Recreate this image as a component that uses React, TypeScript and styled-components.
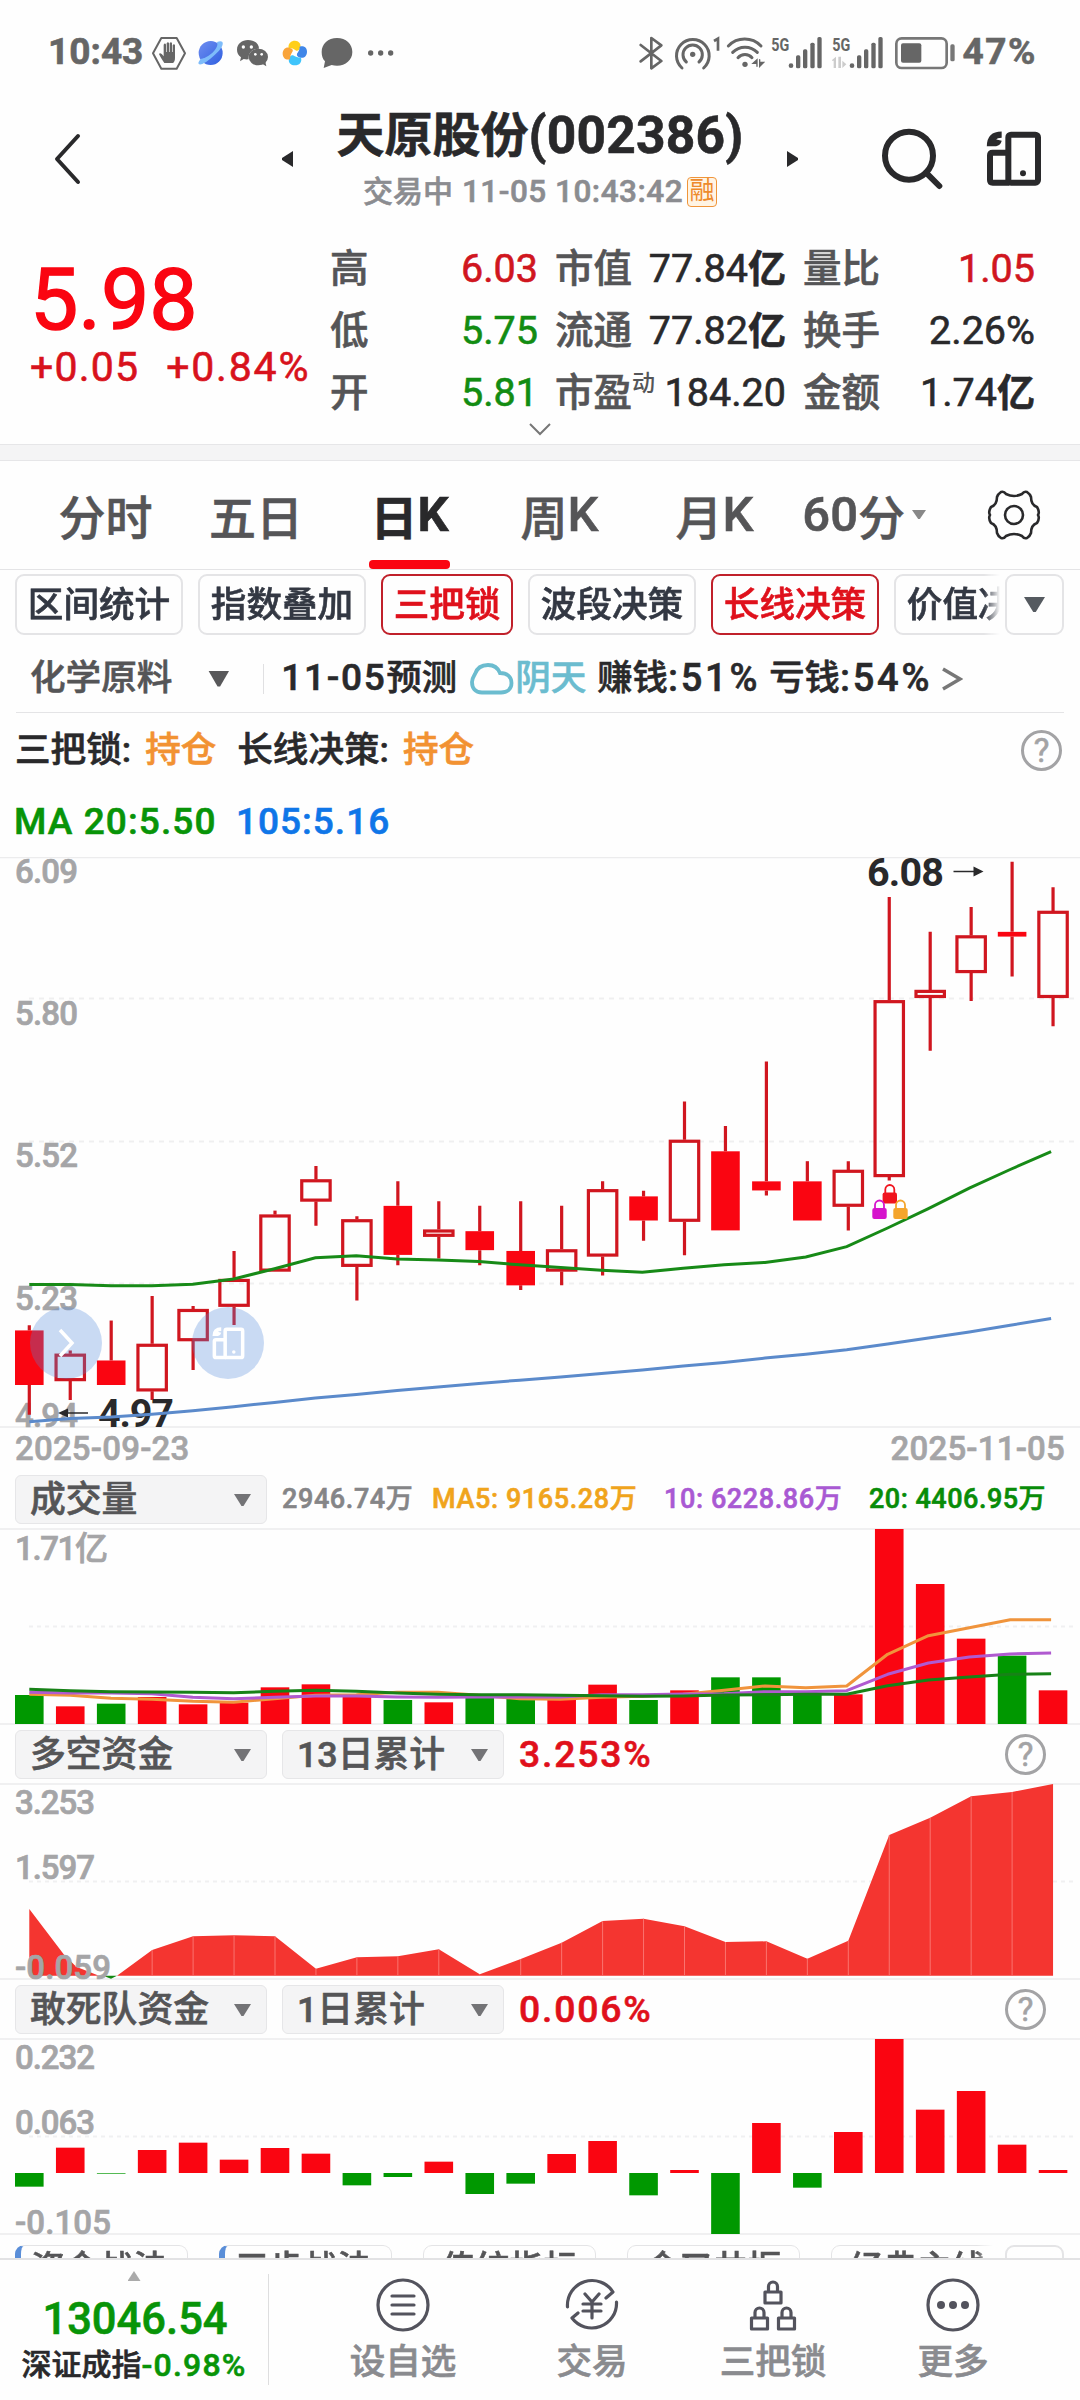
import React from "react";
import styled, { createGlobalStyle, css } from "styled-components";

const RED = "#fa0511";
const DEEP_RED = "#d0161f";
const GREEN = "#009800";
const INK = "#29292b";
const SLATE = "#555557";
const MUTED = "#a5a5a7";
const LINE = "#e6e6e8";
const FONT = 'Roboto, "Noto Sans CJK SC", sans-serif';

const Global = createGlobalStyle`
  * { box-sizing: border-box; }
  body { margin: 0; background: #fdfdfe; font-family: ${FONT}; }
`;

const Screen = styled.main`
  width: 1080px;
  height: 2400px;
  overflow: hidden;
  display: flex;
  flex-direction: column;
  background: #fefefe;
  color: ${INK};
  -webkit-text-stroke: 0.6px;
`;

const Txt = styled.span<{ $s: number; $c?: string; $w?: number; $ls?: number; $ml?: number; $wd?: number }>`
  font-size: ${(p) => p.$s}px;
  line-height: 1.2;
  color: ${(p) => p.$c ?? INK};
  font-weight: ${(p) => p.$w ?? 500};
  letter-spacing: ${(p) => p.$ls ?? 0}px;
  margin-left: ${(p) => p.$ml ?? 0}px;
  ${(p) => p.$wd && css`width: ${p.$wd}px;`}
  white-space: nowrap;
  flex: none;
`;

const Glyph = styled.svg<{ $ml?: number }>`
  display: block;
  flex: none;
  margin-left: ${(p) => p.$ml ?? 0}px;
`;

/* ---------- status bar ---------- */
const StatusBar = styled.div`
  height: 105px;
  flex: none;
  display: flex;
  align-items: center;
  padding: 0 43px 0 48px;
`;
const Spacer = styled.div`flex: 1;`;

function SignalBars({ idle, ml }: { idle?: boolean; ml: number }) {
  return (
    <Glyph width="51" height="36" viewBox="452 43 153 108" $ml={ml} fill="#666">
      <text x="453" y="90" fontFamily="Roboto" fontSize="54" fontWeight="700" textLength="54" lengthAdjust="spacingAndGlyphs">5G</text>
      {idle && <path d="M464 108v34h-7v-22h-7zM471 108v34h7v-34zM483 120v22l12-11zM471 142h8v-34h-8z" fill="#ccc" />}
      <circle cx="512" cy="135" r="7" />
      <rect x="527" y="104" width="13" height="39" rx="5" />
      <rect x="548" y="86" width="13" height="57" rx="5" />
      <rect x="570" y="66" width="13" height="77" rx="5" />
      <rect x="591" y="49" width="13" height="94" rx="5" />
    </Glyph>
  );
}

function Status() {
  return (
    <StatusBar>
      <Txt $s={37} $c="#666" $w={700} $wd={103} $ls={0}>10:43</Txt>
      <Glyph width="36" height="34" viewBox="333 47 108 102" $ml={0}>
        <path d="M364 53h46l25 46-25 46h-46l-25-46z" fill="none" stroke="#666" strokeWidth="6" strokeLinejoin="round" />
        <path d="M373 128c-6-8-12-19-16-27 3-5 8-1 14 7V73c2-5 6-5 7 0v22h2V69c2-4 6-4 7 0v26h2V69c2-4 6-4 7 0v26h2V75c2-4 6-4 7 0v38c0 8-2 12-6 15z" fill="#666" />
      </Glyph>
      <Glyph width="26" height="26" viewBox="475 60 78 78" $ml={11}>
        <defs>
          <linearGradient id="pl" x1="0" y1="0" x2="1" y2="1">
            <stop offset="0" stopColor="#6f8ef0" />
            <stop offset="1" stopColor="#2f5fe0" />
          </linearGradient>
        </defs>
        <circle cx="513" cy="99" r="36" fill="url(#pl)" />
        <path d="M532 66c22-8 22 8 6 26-16 17-34 32-50 40-16 5-14-6-4-16 18 0 56-30 48-50z" fill="#7ebcfa" />
      </Glyph>
      <Glyph width="33" height="28" viewBox="590 56 99 84" $ml={12}>
        <path d="M626 59c19 0 33 11 33 26-22 0-33 14-31 32-6 1-11 0-15-1l-11 7 3-12c-8-6-12-14-12-23 0-17 15-29 33-29z" fill="#666" />
        <ellipse cx="657" cy="110" rx="29" ry="25" fill="#666" />
        <path d="M668 130l13 8-3-14z" fill="#666" />
        <g fill="#fff">
          <circle cx="612" cy="80" r="5" /><circle cx="636" cy="80" r="5" />
          <circle cx="648" cy="102" r="4" /><circle cx="667" cy="102" r="4" />
        </g>
      </Glyph>
      <Glyph width="26" height="26" viewBox="727 60 78 78" $ml={13}>
        <path d="M747 84c-3-14 8-22 19-22s19 9 16 20c-3 9-9 12-12 10-8-6-14-8-23-8z" fill="#ffcf1a" />
        <path d="M780 80c13-4 22 3 22 15s-9 21-20 18c-9-3-12-8-10-12 5-7 8-12 8-21z" fill="#3f86e8" />
        <path d="M784 113c4 13-5 23-18 23s-21-8-18-20c3-9 8-12 12-10 8 5 14 7 24 7z" fill="#3fc4fb" />
        <path d="M751 118c-13 3-22-5-22-17s9-21 20-18c9 2 12 7 10 11-5 8-8 14-8 24z" fill="#f9a43a" />
        <rect x="760" y="93" width="12" height="12" fill="#fff" rx="4" />
      </Glyph>
      <Glyph width="32" height="32" viewBox="843 51 96 96" $ml={13}>
        <path d="M891 54c27 0 46 18 46 42s-20 41-46 41c-6 0-11-1-16-2l-24 9 4-20c-7-7-10-17-10-28 0-24 19-42 46-42z" fill="#666" />
      </Glyph>
      <Glyph width="28" height="10" viewBox="981 82 84 30" $ml={14} fill="#666">
        <circle cx="992" cy="97" r="8" /><circle cx="1022" cy="97" r="8" /><circle cx="1052" cy="97" r="8" />
      </Glyph>
      <Spacer />
      <Glyph width="25" height="36" viewBox="52 43 75 108">
        <path d="M57 73l62 48-30 22V52l30 22-62 48" fill="none" stroke="#666" strokeWidth="8" strokeLinejoin="round" strokeLinecap="round" />
      </Glyph>
      <Glyph width="47" height="36" viewBox="158 43 141 108" $ml={10} fill="none" stroke="#666" strokeWidth="9" strokeLinecap="round">
        <path d="M182 142a49 49 0 1 1 65 0" />
        <path d="M195 124a29 29 0 1 1 38 0" />
        <circle cx="214" cy="101" r="8" fill="#666" stroke="none" />
        <path d="M278 61l12-7v36" strokeWidth="8" strokeLinecap="butt" />
      </Glyph>
      <Glyph width="39" height="36" viewBox="315 43 117 108" $ml={5} fill="none" stroke="#666" strokeWidth="9" strokeLinecap="round">
        <path d="M322 76a68 68 0 0 1 98 0M335 95a52 52 0 0 1 74 0M351 111a28 28 0 0 1 42 0" />
        <circle cx="372" cy="131" r="8" fill="#666" stroke="none" />
        <path d="M408 137v-20l-12 11h11M416 117v20l12-12h-11" strokeWidth="4" fill="#666" strokeLinejoin="miter" />
      </Glyph>
      <SignalBars ml={6} />
      <SignalBars idle ml={10} />
      <Glyph width="63" height="36" viewBox="822 43 189 108" $ml={11}>
        <rect x="829" y="53" width="151" height="89" rx="16" fill="none" stroke="#777" strokeWidth="8" />
        <rect x="843" y="68" width="61" height="58" rx="6" fill="#666" />
        <rect x="991" y="71" width="13" height="51" rx="5" fill="#777" />
      </Glyph>
      <Txt $s={37} $c="#666" $w={700} $ml={5} $ls={1.6}>47%</Txt>
    </StatusBar>
  );
}

/* ---------- header ---------- */
const HeaderBar = styled.header`
  height: 108px;
  margin-bottom: 12px;
  flex: none;
  display: flex;
  align-items: center;
`;
const TitleStack = styled.div`
  width: 494px;
  height: 108px;
  display: flex;
  flex-direction: column;
  align-items: center;
`;
const TitleLine = styled.h1`
  margin: 1px 0 0;
  height: 59px;
  flex: none;
  display: flex;
  align-items: center;
`;
const SubLine = styled.div`
  height: 54px;
  flex: none;
  display: flex;
  align-items: center;
`;
const MarginBadge = styled.span`
  width: 30px;
  height: 30px;
  margin-left: 4px;
  border: 1.5px solid #f0953a;
  border-radius: 4px;
  background: #fff4e4;
  color: #ee8a2c;
  font-size: 25px;
  line-height: 26px;
  text-align: center;
  -webkit-text-stroke: 0;
`;

function FlipGlyph({ size, color, ml, w = 18 }: { size: number; color: string; ml?: number; w?: number }) {
  return (
    <Glyph width={size} height={size} viewBox="1098 334 168 168" $ml={ml} fill="none" stroke={color} strokeWidth={w}>
      <rect x="1165" y="345" width="89" height="144" rx="8" />
      <path d="M1165 399h-47q-8 0-8 8v74q0 8 8 8h50" />
      <path d="M1145 345q-35 0-35 35M1106 370h21q7-1 9-9" strokeWidth={w + 1} />
      <circle cx="1209" cy="461" r="9" fill={color} stroke="none" />
    </Glyph>
  );
}

function Header() {
  return (
    <HeaderBar>
      <Glyph width="28" height="52" viewBox="0 0 28 52" $ml={53}>
        <path d="M25 3L4 26l21 23" fill="none" stroke={INK} strokeWidth="4" strokeLinecap="round" strokeLinejoin="round" />
      </Glyph>
      <Glyph width="12" height="16" viewBox="0 0 12 16" $ml={200}><path d="M12 0v16L1 9V7z" fill={INK} /></Glyph>
      <TitleStack>
        <TitleLine>
          <Txt $s={48} $w={700}>天原股份</Txt>
          <Txt $s={51.5} $w={700} $ls={0.2}>(002386)</Txt>
        </TitleLine>
        <SubLine>
          <Txt $s={30} $c="#8b8c90">交易中</Txt>
          <Txt $s={31.5} $c="#8b8c90" $ml={9} $ls={0.5}>11-05 10:43:42</Txt>
          <MarginBadge>融</MarginBadge>
        </SubLine>
      </TitleStack>
      <Glyph width="12" height="16" viewBox="0 0 12 16"><path d="M0 0v16l11-7V7z" fill={INK} /></Glyph>
      <Glyph width="62" height="62" viewBox="783 324 186 186" $ml={82} fill="none" stroke={INK} strokeWidth="18">
        <circle cx="867" cy="407" r="72" />
        <path d="M918 458l40 40" strokeLinecap="round" />
      </Glyph>
      <FlipGlyph size={56} color={INK} ml={43} />
    </HeaderBar>
  );
}

/* ---------- quote ---------- */
const QuotePanel = styled.section`
  height: 219px;
  flex: none;
  position: relative;
  display: flex;
`;
const PriceSide = styled.div`
  width: 330px;
  padding: 25px 0 0 30px;
`;
const Price = styled.div`
  font-size: 86px;
  line-height: 100px;
  color: ${RED};
  -webkit-text-stroke: 1.4px;
`;
const Change = styled.div`
  display: flex;
  align-items: center;
  height: 36px;
  gap: 27px;
`;
const Stats = styled.div`
  width: 706px;
  padding-top: 13px;
  display: grid;
  grid-template-columns: 208px 231px 232px;
  grid-auto-rows: 62px;
  column-gap: 17px;
`;
const Stat = styled.div`
  display: flex;
  align-items: center;
  justify-content: space-between;
`;
const StatLabel = styled.span`
  display: flex;
  align-items: center;
  height: 62px;
  font-size: 38.5px;
  line-height: 62px;
  font-weight: 500;
  color: ${SLATE};
  white-space: nowrap;
  sup { font-size: 23px; line-height: 24px; margin-bottom: 18px; -webkit-text-stroke: 0; }
`;
const StatValue = styled.span<{ $c?: string }>`
  display: flex;
  align-items: center;
  font-size: 39.5px;
  line-height: 62px;
  color: ${(p) => p.$c ?? INK};
  b { font-size: 38px; font-weight: 700; }
`;
const Expand = styled.span`
  position: absolute;
  left: 529px;
  top: 198px;
`;
const Band = styled.div`
  height: 17px;
  flex: none;
  background: #f4f4f5;
  border-top: 1px solid ${LINE};
  border-bottom: 1px solid ${LINE};
`;

const stats: { label: string; sup?: string; value: string; unit?: string; color?: string }[] = [
  { label: "高", value: "6.03", color: DEEP_RED },
  { label: "市值", value: "77.84", unit: "亿" },
  { label: "量比", value: "1.05", color: DEEP_RED },
  { label: "低", value: "5.75", color: "#128c12" },
  { label: "流通", value: "77.82", unit: "亿" },
  { label: "换手", value: "2.26%" },
  { label: "开", value: "5.81", color: "#128c12" },
  { label: "市盈", sup: "动", value: "184.20" },
  { label: "金额", value: "1.74", unit: "亿" },
];

function Quote() {
  return (
    <>
      <QuotePanel>
        <PriceSide>
          <Price>5.98</Price>
          <Change>
            <Txt $s={41} $c="#d8121c" $w={400} $ls={1.2}>+0.05</Txt>
            <Txt $s={41} $c="#d8121c" $w={400} $ls={1.8}>+0.84%</Txt>
          </Change>
        </PriceSide>
        <Stats>
          {stats.map((s) => (
            <Stat key={s.label}>
              <StatLabel>{s.label}{s.sup && <sup>{s.sup}</sup>}</StatLabel>
              <StatValue $c={s.color}>{s.value}{s.unit && <b>{s.unit}</b>}</StatValue>
            </Stat>
          ))}
        </Stats>
        <Expand>
          <Glyph width="22" height="13" viewBox="0 0 22 13"><path d="M1 1l10 10L21 1" fill="none" stroke="#777" strokeWidth="2" /></Glyph>
        </Expand>
      </QuotePanel>
      <Band />
    </>
  );
}

/* ---------- period tabs ---------- */
const TabBar = styled.nav`
  height: 109px;
  flex: none;
  display: grid;
  grid-template-columns: 153px 148px 159px 141px 169px 127px 115px;
  padding-left: 29px;
  border-bottom: 1px solid #e4e4e6;
`;
const Tab = styled.div<{ $on?: boolean; $end?: boolean }>`
  position: relative;
  display: flex;
  justify-content: ${(p) => (p.$end ? "flex-end" : "center")};
  align-items: center;
  height: 107px;
  font-size: 47px;
  font-weight: ${(p) => (p.$on ? 700 : 500)};
  color: ${(p) => (p.$on ? INK : SLATE)};
  white-space: nowrap;
  span { font-size: 49px; }
  ${(p) => p.$on && css`
    &::after {
      content: "";
      position: absolute;
      bottom: -1px;
      width: 81px;
      height: 9px;
      border-radius: 4px;
      background: ${RED};
    }
  `}
`;
const Triangle = styled.i<{ $w: number; $h: number; $c?: string; $ml?: number; $mr?: number }>`
  flex: none;
  width: ${(p) => p.$w}px;
  height: ${(p) => p.$h}px;
  margin-left: ${(p) => p.$ml ?? 0}px;
  margin-right: ${(p) => p.$mr ?? 0}px;
  background: ${(p) => p.$c ?? "#737376"};
  clip-path: polygon(0 0, 100% 0, 56% 100%, 44% 100%);
`;

function Tabs() {
  return (
    <TabBar>
      <Tab>分时</Tab>
      <Tab>五日</Tab>
      <Tab $on>日<span>K</span></Tab>
      <Tab>周<span>K</span></Tab>
      <Tab>月<span>K</span></Tab>
      <Tab $end><span>60</span>分<Triangle $w={14} $h={9} $ml={7} $c="#888" /></Tab>
      <Tab $end>
        <Glyph width="54" height="50" viewBox="-27 -25 54 50" fill="none" stroke={INK} strokeWidth="2.6">
          <path d="M-13 -23Q-10 -24 -8 -21Q0 -17 8 -21Q10 -24 13 -23Q16 -21 17 -18Q17 -10 23 -8Q26 -3 24 0Q26 3 23 8Q17 10 17 18Q16 21 13 23Q10 24 8 21Q0 17 -8 21Q-10 24 -13 23Q-16 21 -17 18Q-17 10 -23 8Q-26 3 -24 0Q-26 -3 -23 -8Q-17 -10 -17 -18Q-16 -21 -13 -23Z" strokeLinejoin="round" />
          <circle r="9" />
        </Glyph>
      </Tab>
    </TabBar>
  );
}

/* ---------- indicator chips ---------- */
const ChipRow = styled.div`
  height: 65px;
  flex: none;
  display: flex;
  padding: 4px 16px 0 15px;
`;
const ChipScroller = styled.div<{ $w: number; $gap: number }>`
  width: ${(p) => p.$w}px;
  flex: none;
  display: flex;
  gap: ${(p) => p.$gap}px;
  overflow: hidden;
  mask-image: linear-gradient(to right, #000 calc(100% - 16px), transparent);
`;
const Chip = styled.div<{ $on?: boolean; $w: number }>`
  flex: none;
  width: ${(p) => p.$w}px;
  height: 61px;
  border: 2px solid ${(p) => (p.$on ? "#c0202a" : "#e4e4e6")};
  border-radius: 9px;
  text-align: center;
  font-size: 35.6px;
  line-height: 59px;
  font-weight: 500;
  color: ${(p) => (p.$on ? "#df111c" : "#333843")};
  white-space: nowrap;
`;
const ChipMore = styled.div`
  width: 59px;
  height: 61px;
  margin-left: auto;
  display: flex;
  align-items: center;
  justify-content: center;
  border: 2px solid #e4e4e6;
  border-radius: 9px;
`;

function Chips() {
  return (
    <ChipRow>
      <ChipScroller $w={985} $gap={15}>
        <Chip $w={168}>区间统计</Chip>
        <Chip $w={168}>指数叠加</Chip>
        <Chip $w={132} $on>三把锁</Chip>
        <Chip $w={168}>波段决策</Chip>
        <Chip $w={168} $on>长线决策</Chip>
        <Chip $w={168}>价值决策</Chip>
      </ChipScroller>
      <ChipMore><Triangle $w={21} $h={15} $c="#555a60" /></ChipMore>
    </ChipRow>
  );
}

/* ---------- text rows ---------- */
const Row = styled.div<{ $h: number; $pl?: number; $pt?: number }>`
  height: ${(p) => p.$h}px;
  padding-left: ${(p) => p.$pl ?? 15}px;
  padding-right: 16px;
  padding-top: ${(p) => p.$pt ?? 0}px;
  flex: none;
  display: flex;
  align-items: center;
`;
const Rule = styled.hr`
  flex: none;
  height: 1px;
  width: 1048px;
  margin: 0 auto;
  border: 0;
  background: #e4e4e6;
`;
const VRule = styled.i<{ $h: number; $ml: number; $mr: number }>`
  width: 1px;
  height: ${(p) => p.$h}px;
  margin: 0 ${(p) => p.$mr}px 0 ${(p) => p.$ml}px;
  background: #e0e0e2;
`;
const HelpRing = styled.span<{ $mr?: number }>`
  width: 41px;
  height: 41px;
  margin-left: auto;
  margin-right: ${(p) => p.$mr ?? 0}px;
  border: 3px solid #a3a3a5;
  border-radius: 50%;
  color: #a3a3a5;
  font-size: 33px;
  line-height: 36px;
  text-align: center;
`;

function Forecast() {
  return (
    <>
      <Row $h={77} $pl={30} $pt={10}>
        <Txt $s={35.6} $c={SLATE}>化学原料</Txt>
        <Triangle $w={21} $h={16} $ml={36} $c="#58585a" />
        <VRule $h={30} $ml={34} $mr={17} />
        <Txt $s={37} $ls={1.7}>11-05</Txt>
        <Txt $s={35.3}>预测</Txt>
        <Glyph width="44" height="32" viewBox="0 0 44 32" $ml={13}>
          <path d="M12 29.500C5 29.500 2 25 2 19C2 15 4 13 5 11C7 5 12 2 18 2C24 2 28 5 30 10C37 10 41.500 14 41.500 20C41.500 26 37 29.500 31 29.500Z" fill="none" stroke="#6bbccf" strokeWidth="3.800" />
        </Glyph>
        <Txt $s={35.6} $c="#6bbccf" $ml={1}>阴天</Txt>
        <Txt $s={35.3} $ml={11}>赚钱</Txt>
        <Txt $s={38} $ls={2.8}>:51%</Txt>
        <Txt $s={35.3} $ml={9}>亏钱</Txt>
        <Txt $s={38} $ls={2.8}>:54%</Txt>
        <Glyph width="21" height="24" viewBox="0 0 21 24" $ml={10}><path d="M1 2l17 10L1 22" fill="none" stroke="#777" strokeWidth="3.500" /></Glyph>
      </Row>
      <Rule />
    </>
  );
}

function Signals() {
  return (
    <>
      <Row $h={73} $pt={2}>
        <Txt $s={35.6}>三把锁:</Txt>
        <Txt $s={35.6} $c="#f29232" $ml={14}>持仓</Txt>
        <Txt $s={35.6} $ml={21}>长线决策:</Txt>
        <Txt $s={35.6} $c="#f29232" $ml={14}>持仓</Txt>
        <HelpRing $mr={2}>?</HelpRing>
      </Row>
      <Row $h={71} $pt={2} $pl={14}>
        <Txt $s={37} $c="#089408" $ls={1.1} $wd={222}>MA 20:5.50</Txt>
        <Txt $s={37} $c="#0f76e8" $ls={1}>105:5.16</Txt>
      </Row>
    </>
  );
}

/* ---------- charts ---------- */
const FIRST = 29.3;
const STEP = 40.95;
const cx = (i: number) => FIRST + i * STEP;
const points = (ys: number[], toY: (v: number) => number) => ys.map((v, i) => `${(cx(i) - i * 0.08).toFixed(1)},${toY(v).toFixed(1)}`).join(" ");

const Plot = styled.svg`
  display: block;
  flex: none;
`;
const ChartWrap = styled.div`
  position: relative;
  flex: none;
`;
const FloatButton = styled.div<{ $x: number }>`
  position: absolute;
  left: ${(p) => p.$x}px;
  top: 450px;
  width: 72px;
  height: 72px;
  border-radius: 50%;
  background: rgba(80, 135, 220, 0.3);
  display: flex;
  align-items: center;
  justify-content: center;
`;

function AxisText({ x = 16, y, w, children }: { x?: number; y: number; w: number; children: string }) {
  return <text x={x - 1} y={y} fontSize="33" fontWeight="500" fill={MUTED} stroke={MUTED} strokeWidth="0.700" textLength={w + 2}>{children}</text>;
}

/* hollow flag, body top, body bottom, wick top, wick bottom */
const candles: [0 | 1, number, number, number, number][] = [
  [0, 1215, 1353, 1202, 1428], [1, 1274, 1343, 1266, 1391], [0, 1291, 1353, 1190, 1353], [1, 1249, 1369, 1128, 1391],
  [1, 1161, 1242, 1153, 1315], [1, 1085, 1155, 1014, 1201], [1, 922, 1066, 912, 922], [1, 833, 889, 799, 950],
  [1, 934, 1054, 926, 1139], [0, 900, 1024, 838, 1050], [1, 960, 978, 888, 1033], [0, 964, 1012, 900, 1050],
  [0, 1014, 1101, 888, 1113], [1, 1010, 1066, 900, 1101], [1, 858, 1028, 838, 1076], [0, 876, 937, 862, 988],
  [1, 733, 940, 636, 1025], [0, 762, 962, 698, 962], [0, 838, 861, 535, 874], [0, 838, 937, 787, 937],
  [1, 809, 902, 787, 962], [1, 380, 827, 119, 836], [1, 354, 374, 207, 508], [1, 216, 311, 144, 382],
  [0, 207, 219, 30, 320], [1, 154, 374, 94, 446],
];
const ma20 = [1099, 1099, 1102, 1102, 1098, 1085, 1059, 1031, 1026, 1034, 1037, 1041, 1049, 1056, 1063, 1068, 1058, 1049, 1043, 1029, 1003, 956, 907, 855, 808, 763];
const ma105 = [1446, 1438, 1434, 1427, 1418, 1408, 1397, 1386, 1377, 1367, 1358, 1349, 1341, 1333, 1324, 1315, 1305, 1296, 1285, 1275, 1264, 1249, 1234, 1219, 1202, 1185];
const ky = (v: number) => 850 + v / 2.529;

function Lock({ x, y, c }: { x: number; y: number; c: string }) {
  return (
    <g transform={`translate(${x} ${y})`}>
      <path d="M-4.500 9V5a4.500 4.500 0 0 1 9 0v4" fill="none" stroke={c} strokeWidth="1.800" />
      <rect x="-7.200" y="8" width="14.400" height="11" rx="2" fill={c} />
    </g>
  );
}

function KChart() {
  return (
    <ChartWrap>
      <Plot width="1080" height="571" viewBox="0 857 1080 571" fontFamily="Roboto">
        <path d="M0 857.500H1080M0 1427H1080" stroke="#ececed" strokeWidth="1.500" />
        <path d="M29 998.500H1074M29 1141.500H1074M29 1283.500H1074" stroke="#efeff0" strokeWidth="2" strokeDasharray="5 5" />
        <AxisText y={882.5} w={61}>6.09</AxisText>
        <AxisText y={1025} w={61}>5.80</AxisText>
        <AxisText y={1167} w={61}>5.52</AxisText>
        <AxisText y={1310} w={61}>5.23</AxisText>
        <AxisText y={1427} w={61}>4.94</AxisText>
        {candles.map(([hollow, t, b, wt, wb], i) => {
          const x = cx(i);
          return (
            <g key={i} stroke={DEEP_RED} strokeWidth="3.200">
              <path d={`M${x} ${ky(wt)}V${ky(t)}M${x} ${ky(b)}V${Math.max(ky(b), ky(wb))}`} />
              {hollow
                ? <rect x={x - 14.2} y={ky(t) + 1.4} width="28.400" height={ky(b) - ky(t) - 2.8} fill="none" />
                : <rect x={x - 14.3} y={ky(t)} width="28.600" height={ky(b) - ky(t)} fill={RED} stroke="none" />}
            </g>
          );
        })}
        <text x="98" y="1427" fontSize="39.500" fontWeight="700" fill={INK} textLength="76">4.97</text>
        <path d="M68 1413H88" stroke={INK} strokeWidth="1.500" />
        <path d="M58 1413l10-4.500v9z" fill={INK} />
        <text x="867" y="886" fontSize="39.500" fontWeight="700" fill={INK} textLength="77">6.08</text>
        <path d="M953.500 871.500H975" stroke={INK} strokeWidth="1.500" />
        <path d="M983.500 871.500l-10-5v10z" fill={INK} />
        <polyline points={points(ma105, ky)} fill="none" stroke="#5b8acb" strokeWidth="3" />
        <polyline points={points(ma20, ky)} fill="none" stroke="#178a17" strokeWidth="3" />
        <Lock x={889.8} y={1184.500} c="#f0141e" />
        <Lock x={879.5} y={1200} c="#d614cc" />
        <Lock x={900.5} y={1200} c="#f4a52c" />
      </Plot>
      <FloatButton $x={30}>
        <Glyph width="20" height="30" viewBox="0 0 20 30" $ml={0}><path d="M4 2l12 13L4 28" fill="none" stroke="#fff" strokeWidth="3.500" /></Glyph>
      </FloatButton>
      <FloatButton $x={192}>
        <FlipGlyph size={33} color="#fff" w={18} />
      </FloatButton>
    </ChartWrap>
  );
}

const DateRow = styled.div`
  height: 41px;
  flex: none;
  display: flex;
  align-items: center;
  justify-content: space-between;
  padding: 1px 15px 0;
`;

const Select = styled.div<{ $w: number; $ml?: number }>`
  width: ${(p) => p.$w}px;
  height: 49px;
  flex: none;
  margin-left: ${(p) => p.$ml ?? 0}px;
  padding-left: 14px;
  display: flex;
  align-items: center;
  border: 1.5px solid #e6e6e8;
  border-radius: 6px;
  background: #f4f4f5;
  color: ${SLATE};
  font-size: 35.8px;
  line-height: 46px;
  padding-top: 2px;
  font-weight: 500;
  white-space: nowrap;
`;

function Dropdown({ w, ml, children }: { w: number; ml?: number; children: React.ReactNode }) {
  return (
    <Select $w={w} $ml={ml}>
      {children}
      <Spacer />
      <Triangle $w={17} $h={12} $mr={15} />
    </Select>
  );
}

function Frame({ top }: { top: number }) {
  return (
    <>
      <path d={`M0 ${top}H1080M0 ${top + 195}H1080`} stroke="#ececed" strokeWidth="1.500" />
      <path d={`M29 ${top + 97.500}H1076`} stroke="#f0f0f1" strokeWidth="2" strokeDasharray="4 4" />
    </>
  );
}

const volumes: [number, 0 | 1][] = [
  [705, 0], [739, 1], [731, 0], [711, 1], [733, 1], [728, 1], [682, 1], [673, 1], [704, 1], [720, 0], [727, 1], [712, 0], [716, 0],
  [716, 1], [674, 1], [720, 0], [691, 1], [652, 0], [652, 0], [705, 0], [703, 1], [207, 1], [372, 1], [536, 1], [587, 0], [691, 1],
];
const v5 = [703, 706, 715, 718, 724, 727, 716, 706, 704, 697, 697, 706, 716, 718, 712, 709, 703, 691, 678, 683, 678, 583, 527, 503, 479, 479];
const v10 = [697, 699, 699, 701, 712, 716, 712, 708, 708, 711, 712, 711, 711, 711, 704, 704, 702, 701, 695, 695, 692, 643, 609, 591, 582, 579];
const v20 = [688, 692, 695, 696, 697, 698, 694, 691, 694, 699, 703, 704, 704, 706, 707, 709, 708, 705, 704, 703, 703, 677, 660, 651, 643, 641];
const vy = (v: number) => 1460 + v / 3;

function Volume() {
  return (
    <>
      <Row $h={59} $pt={1}>
        <Dropdown w={252}>成交量</Dropdown>
        <Txt $s={27} $c="#858587" $ml={15} $ls={0.6} $wd={150}>2946.74万</Txt>
        <Txt $s={27} $c="#f0a41c" $ls={0.6} $wd={232}>MA5: 9165.28万</Txt>
        <Txt $s={27} $c="#a959d3" $ls={0.6} $wd={205}>10: 6228.86万</Txt>
        <Txt $s={27} $c="#088c08" $ls={0.5}>20: 4406.95万</Txt>
      </Row>
      <Plot width="1080" height="197" viewBox="0 1528 1080 197" fontFamily={FONT}>
        <Frame top={1529} />
        <AxisText y={1559.5} w={91}>1.71亿</AxisText>
        {volumes.map(([v, up], i) => (
          <rect key={i} x={cx(i) - 14.3} y={vy(v)} width="28.600" height={1724 - vy(v)} fill={up ? RED : GREEN} />
        ))}
        <g fill="none" strokeWidth="3" strokeLinejoin="round">
          <polyline points={points(v5, vy)} stroke="#f0943c" />
          <polyline points={points(v10, vy)} stroke="#b05ad0" />
          <polyline points={points(v20, vy)} stroke="#178217" />
        </g>
      </Plot>
    </>
  );
}

const flows = [417, 583, 617, 540, 499, 496, 499, 596, 562, 559, 538, 613, 567, 518, 453, 446, 469, 516, 514, 566, 512, 195, 143, 79, 66, 42];
const fy = (v: number) => 1770 + v / 3;

function Flow() {
  return (
    <>
      <Row $h={58}>
        <Dropdown w={252}>多空资金</Dropdown>
        <Dropdown w={222} ml={15}>13日累计</Dropdown>
        <Txt $s={37.3} $c="#e0101b" $ml={15} $ls={1.8}>3.253%</Txt>
        <HelpRing $mr={18}>?</HelpRing>
      </Row>
      <Plot width="1080" height="197" viewBox="0 1783 1080 197" fontFamily="Roboto">
        <Frame top={1784} />
        <path d={`M${cx(0)} ${fy(417)}L${cx(1) - 6} ${fy(555)}L${cx(1) + 6} ${fy(590)}L99 1975.700H${cx(0)}Z`} fill="#f43530" />
        <path d={`M117 1975.700L${flows.slice(3).map((v, i) => `${cx(i + 3)} ${fy(v)}`).join("L")}V1975.700Z`} fill="#f43530" />
        <path d="M103 1975.700h14l-6 3z" fill="#118811" />
        {flows.map((v, i) => i > 2 && i < 25 && <path key={i} d={`M${cx(i)} ${fy(v)}V1975`} stroke="#fa7b76" strokeWidth="0.900" />)}
        <AxisText y={1814} w={78}>3.253</AxisText>
        <AxisText y={1879} w={78}>1.597</AxisText>
        <AxisText y={1979} w={94}>-0.059</AxisText>
      </Plot>
    </>
  );
}

const daily = [620, 503, 581, 510, 488, 539, 504, 521, 616, 591, 545, 642, 611, 522, 483, 646, 570, 762, 429, 623, 456, 177, 389, 333, 494, 570];

function Daily() {
  return (
    <>
      <Row $h={58}>
        <Dropdown w={252}>敢死队资金</Dropdown>
        <Dropdown w={222} ml={15}>1日累计</Dropdown>
        <Txt $s={37.3} $c="#e0101b" $ml={15} $ls={1.8}>0.006%</Txt>
        <HelpRing $mr={18}>?</HelpRing>
      </Row>
      <Plot width="1080" height="197" viewBox="0 2038 1080 197" fontFamily="Roboto">
        <Frame top={2039} />
        {daily.map((v, i) => {
          const y = 1980 + v / 3;
          const up = v < 579;
          return <rect key={i} x={cx(i) - 14.3} y={up ? y : 2173} width="28.600" height={up ? 2173 - y : y - 2173} fill={up ? RED : GREEN} />;
        })}
        <AxisText y={2069} w={78}>0.232</AxisText>
        <AxisText y={2134} w={78}>0.063</AxisText>
        <AxisText y={2234} w={94}>-0.105</AxisText>
      </Plot>
    </>
  );
}

/* ---------- strategy strip and bottom bar ---------- */
const Strip = styled.div`
  height: 23px;
  flex: none;
  overflow: hidden;
  display: flex;
  padding: 10px 16px 0 15px;
`;
const StripChip = styled(Chip)<{ $mark?: boolean }>`
  font-size: 34px;
  line-height: 44px;
  border-width: 1.5px;
  color: ${SLATE};
  ${(p) => p.$mark && css`border-left: 6px solid #5a8ed8; padding-right: 10px;`}
`;
const BottomBar = styled.footer`
  height: 142px;
  flex: none;
  display: flex;
  border-top: 2px solid #e2e2e4;
`;
const IndexBox = styled.div`
  width: 268px;
  display: flex;
  flex-direction: column;
  align-items: center;
  padding-top: 11px;
`;
const UpMark = styled.i`
  width: 13px;
  height: 10px;
  background: #aaa;
  clip-path: polygon(50% 0, 100% 100%, 0 100%);
`;
const IndexLine = styled.div<{ $h: number; $mt: number }>`
  height: ${(p) => p.$h}px;
  margin-top: ${(p) => p.$mt}px;
  display: flex;
  align-items: center;
`;
const NavDivider = styled.i`
  width: 1px;
  height: 111px;
  margin-top: 14px;
  background: #dededf;
`;
const NavItem = styled.div<{ $w: number; $ml?: number }>`
  width: ${(p) => p.$w}px;
  margin-left: ${(p) => p.$ml ?? 0}px;
  display: flex;
  flex-direction: column;
  align-items: center;
  padding-top: 17px;
  gap: 6px;
  font-size: 35.6px;
  line-height: 46px;
  font-weight: 500;
  color: #8a8b8f;
`;

function NavLock({ x, y }: { x: number; y: number }) {
  return <path d={`M${x - 8} ${y + 11}h16v11h-16zM${x - 4.500} ${y + 11}v-5.500a4.500 4.500 0 0 1 9 0v5.500`} />;
}

function Bottom() {
  const pen = { fill: "none", stroke: "#53535d", strokeWidth: 3.2 };
  return (
    <>
      <Strip>
        <ChipScroller $w={978} $gap={31}>
          <StripChip $w={173} $mark>资金战法</StripChip>
          <StripChip $w={173} $mark>三步战法</StripChip>
          <StripChip $w={173}>传统指标</StripChip>
          <StripChip $w={173}>金叉共振</StripChip>
          <StripChip $w={173}>经典主线</StripChip>
        </ChipScroller>
        <ChipMore />
      </Strip>
      <BottomBar>
        <IndexBox>
          <UpMark />
          <IndexLine $h={44} $mt={17}><Txt $s={43.5} $c="#089408" $ml={2}>13046.54</Txt></IndexLine>
          <IndexLine $h={38} $mt={4}>
            <Txt $s={30}>深证成指</Txt>
            <Txt $s={32} $c="#089408" $ls={1.2}>-0.98%</Txt>
          </IndexLine>
        </IndexBox>
        <NavDivider />
        <NavItem $w={188} $ml={40}>
          <Glyph width="56" height="56" viewBox="-28 -28 56 56" {...pen}>
            <circle r="25" />
            <path d="M-11-9H11M-11 0H11M-11 9H11" strokeLinecap="round" />
          </Glyph>
          设自选
        </NavItem>
        <NavItem $w={190}>
          <Glyph width="56" height="56" viewBox="-28 -28 56 56" {...pen}>
            <path d="M-24.500 2A24.700 24.700 0 0 1 21-13L14-7M24.500-3A24.700 24.700 0 0 1-20 13L-14 8M-7-11L0-3L7-11M0-3V13M-9-1H9M-9 6H9" strokeLinecap="round" strokeLinejoin="round" />
          </Glyph>
          交易
        </NavItem>
        <NavItem $w={172}>
          <Glyph width="56" height="56" viewBox="-28 -28 56 56" {...pen} strokeLinejoin="round">
            <NavLock x={0} y={-24} /><NavLock x={-13.500} y={2} /><NavLock x={13.500} y={2} />
          </Glyph>
          三把锁
        </NavItem>
        <NavItem $w={188}>
          <Glyph width="56" height="56" viewBox="-28 -28 56 56" {...pen}>
            <circle r="25" />
            <g fill="#53535d" stroke="none"><circle cx="-12" r="4" /><circle r="4" /><circle cx="12" r="4" /></g>
          </Glyph>
          更多
        </NavItem>
      </BottomBar>
    </>
  );
}

export default function App() {
  return (
    <Screen>
      <Global />
      <Status />
      <Header />
      <Quote />
      <Tabs />
      <Chips />
      <Forecast />
      <Signals />
      <KChart />
      <DateRow>
        <Txt $s={33} $c={MUTED} $ls={0.2}>2025-09-23</Txt>
        <Txt $s={33} $c={MUTED} $ls={0.2}>2025-11-05</Txt>
      </DateRow>
      <Volume />
      <Flow />
      <Daily />
      <Bottom />
    </Screen>
  );
}
